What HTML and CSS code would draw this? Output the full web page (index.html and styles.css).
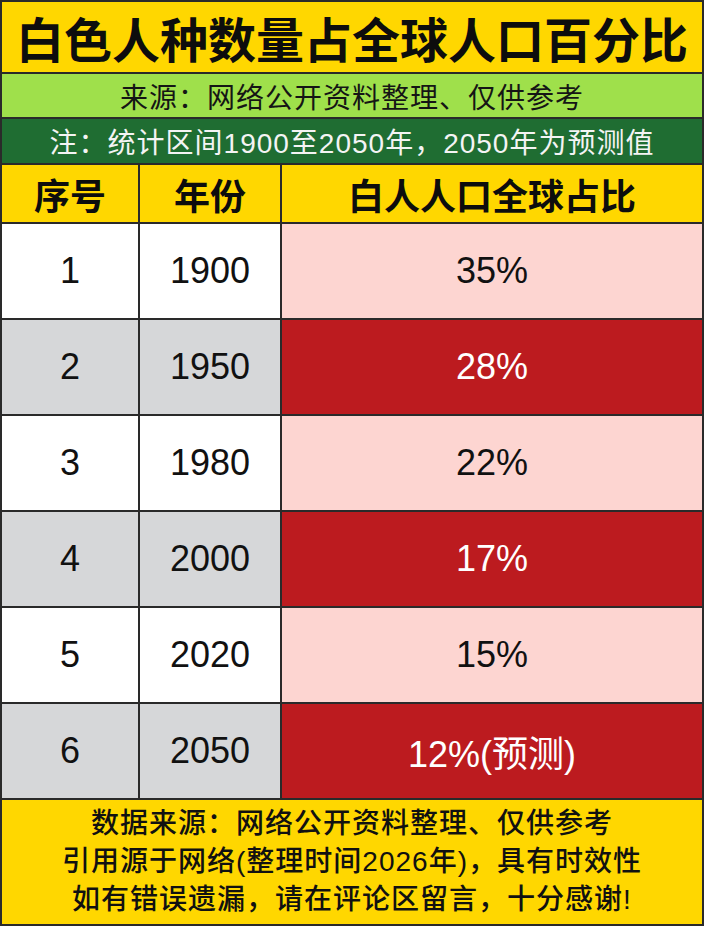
FILE: index.html
```html
<!DOCTYPE html>
<html lang="zh-CN">
<head>
<meta charset="utf-8">
<title>白色人种数量占全球人口百分比</title>
<link rel="stylesheet" href="styles.css">
</head>
<body>
<div class="sheet">
  <div class="cell span title">白色人种数量占全球人口百分比</div>
  <div class="cell span source">来源：网络公开资料整理、仅供参考</div>
  <div class="cell span note">注：统计区间1900至2050年，2050年为预测值</div>

  <div class="cell head">序号</div>
  <div class="cell head">年份</div>
  <div class="cell head">白人人口全球占比</div>

  <div class="cell data white">1</div>
  <div class="cell data white">1900</div>
  <div class="cell data pink">35%</div>

  <div class="cell data grey">2</div>
  <div class="cell data grey">1950</div>
  <div class="cell data red">28%</div>

  <div class="cell data white">3</div>
  <div class="cell data white">1980</div>
  <div class="cell data pink">22%</div>

  <div class="cell data grey">4</div>
  <div class="cell data grey">2000</div>
  <div class="cell data red">17%</div>

  <div class="cell data white">5</div>
  <div class="cell data white">2020</div>
  <div class="cell data pink">15%</div>

  <div class="cell data grey">6</div>
  <div class="cell data grey">2050</div>
  <div class="cell data red">12%(预测)</div>

  <div class="cell span footer">
    <p>数据来源：网络公开资料整理、仅供参考</p>
    <p>引用源于网络(整理时间2026年)，具有时效性</p>
    <p>如有错误遗漏，请在评论区留言，十分感谢!</p>
  </div>
</div>
</body>
</html>
```
FILE: styles.css
```css
html, body {
  margin: 0;
  padding: 0;
  background: #2a2a2a;
}

.sheet {
  width: 704px;
  height: 926px;
  box-sizing: border-box;
  padding: 2px;
  display: grid;
  grid-template-columns: 136px 140px 420px;
  grid-template-rows: 70px 43px 44px 57px repeat(6, 94px) 124px;
  gap: 2px;
  background: #2a2a2a;
  font-family: "Liberation Sans", "Noto Sans CJK SC", sans-serif;
  color: #111;
}

.cell {
  display: flex;
  align-items: center;
  justify-content: center;
  white-space: nowrap;
}

.span {
  grid-column: 1 / -1;
}

.title {
  background: #ffd700;
  font-size: 48px;
  font-weight: 700;
  color: #0d0d0d;
}

.source {
  background: #9fe04b;
  font-size: 28px;
  letter-spacing: 1px;
  color: #151515;
}

.note {
  background: #1f6d32;
  font-size: 28px;
  letter-spacing: 1px;
  color: #f4f4f4;
}

.head {
  background: #ffd700;
  font-size: 36px;
  font-weight: 700;
  color: #0d0d0d;
}

.data {
  font-size: 36px;
  color: #111;
}

.white { background: #ffffff; }
.grey { background: #d6d7d9; }
.pink { background: #fdd5d1; }
.red {
  background: #bc1b1f;
  color: #ffffff;
}

.footer {
  background: #ffd700;
  flex-direction: column;
  font-size: 28px;
  font-weight: 500;
  letter-spacing: 1px;
  color: #111;
}

.footer p {
  margin: 0;
  line-height: 38px;
}
```
